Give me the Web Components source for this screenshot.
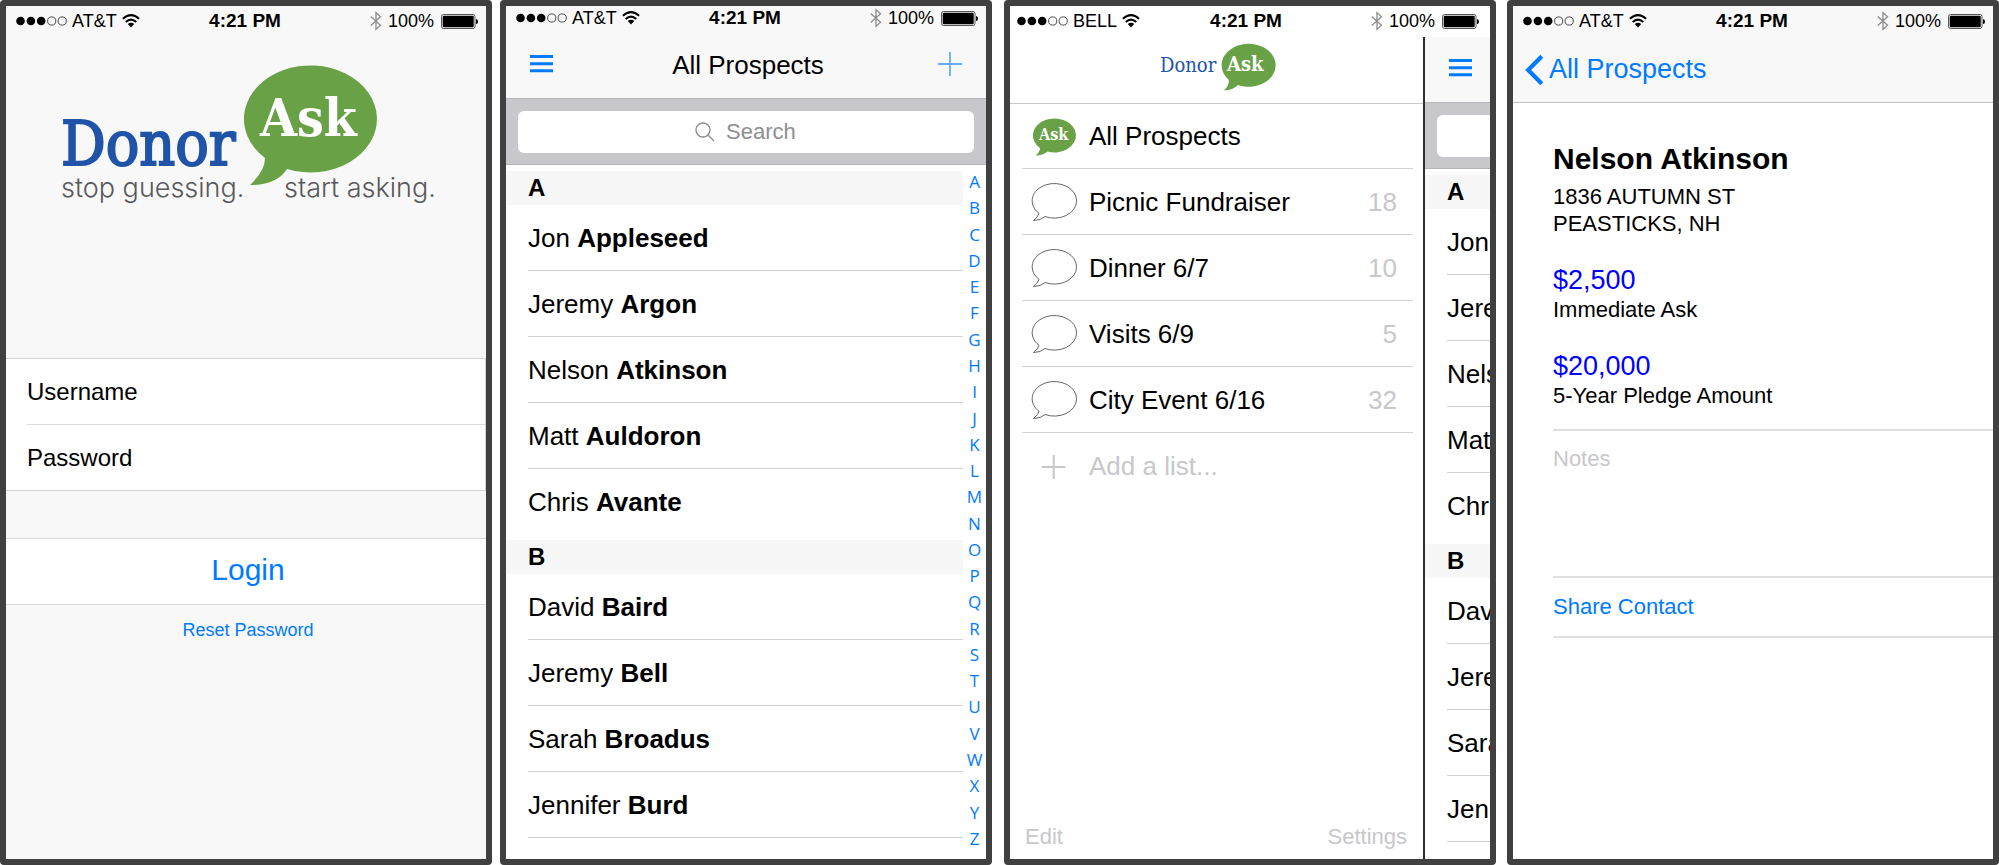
<!DOCTYPE html>
<html lang="en">
<head>
<meta charset="utf-8">
<title>DonorAsk mobile screens</title>
<style>
  body { margin: 0; background: #fff; color: #000; font-family: "Liberation Sans", Arial, sans-serif; }
  main { display: flex; }
  phone-frame { flex: 1 1 0; min-width: 0; }
  phone-frame:nth-child(2) { margin-left: 8px; }
  phone-frame:nth-child(3) { margin-left: 12px; }
  phone-frame:nth-child(4) { margin-left: 11px; }
</style>
</head>
<body>
<main>
  <phone-frame carrier="AT&amp;T" style="--screen:#f8f8f8"><login-screen></login-screen></phone-frame>
  <phone-frame carrier="AT&amp;T" style="--status:#f8f8f8;--status-height:27px;--status-bottom:3px"><prospects-screen full></prospects-screen></phone-frame>
  <phone-frame carrier="BELL" style="--status-left:7px;--status-right:11px"><drawer-screen></drawer-screen></phone-frame>
  <phone-frame carrier="AT&amp;T" style="--status:#f8f8f8"><contact-screen></contact-screen></phone-frame>
</main>
<script>
const define = (name, render) => customElements.define(name, class extends HTMLElement {
  connectedCallback() {
    if (this.shadowRoot) return;
    this.attachShadow({ mode: 'open' }).innerHTML = render(this);
  }
});

const reset = `
  *, *::before { box-sizing: border-box; }
  button, input, textarea { font: inherit; color: inherit; background: none; border: 0; padding: 0; margin: 0; outline: 0; }
  a { color: #007aff; text-decoration: none; }
  svg { display: block; flex: none; }
`;

define('status-bar', el => `
  <style>${reset}
    :host { display: grid; grid-template-columns: 1fr auto 1fr; align-items: center; box-sizing: border-box;
      height: var(--status-height, 31px); padding: 0 var(--status-right, 8px) var(--status-bottom, 1px) var(--status-left, 10px);
      background: var(--status, transparent); font-size: 18px; line-height: 24px; white-space: nowrap; }
    .side { display: flex; align-items: center; }
    .carrier { margin: 0 5px; }
    .right { justify-content: flex-end; }
    .time { font-size: 19px; font-weight: bold; padding-right: 4px; }
    .percent { margin: 0 7px 0 6px; }
  </style>
  <div class="side">
    <svg width="51" height="10" viewBox="0 0 51 10" aria-hidden="true">
      <circle cx="4.5" cy="5" r="4.3"/><circle cx="14.9" cy="5" r="4.3"/><circle cx="25.2" cy="5" r="4.3"/>
      <g fill="none" stroke="#222" stroke-width=".8"><circle cx="35.7" cy="5" r="4.1"/><circle cx="46.2" cy="5" r="4.1"/></g>
    </svg>
    <span class="carrier">${el.getAttribute('carrier').replace('&', '&amp;')}</span>
    <svg width="18" height="14" viewBox="0 0 18 14" aria-hidden="true">
      <g fill="none" stroke="#000" stroke-width="2"><path d="M.9 4.7Q9-2.5 17.1 4.7"/><path d="M3.7 7.9Q9 3.3 14.3 7.9"/></g>
      <path d="M5.8 10Q9 7.4 12.2 10L9 13.6Z"/>
    </svg>
  </div>
  <span class="time">4:21 PM</span>
  <div class="side right">
    <svg width="12" height="20" viewBox="0 0 12 20" aria-hidden="true"><path d="M.8 5.5L10.5 14.3L6 18.4V1.6L10.5 5.7L.8 14.5" fill="none" stroke="#8c8c8c" stroke-width="1.3"/></svg>
    <span class="percent">100%</span>
    <svg width="37" height="15" viewBox="0 0 37 15" aria-hidden="true">
      <rect x=".5" y=".5" width="33.5" height="14" rx="2" fill="none" stroke="#555"/>
      <rect x="1.7" y="1.7" width="31" height="11.6" rx="1"/><path d="M35 5Q37 5 37 7.5T35 10Z"/>
    </svg>
  </div>`);

define('phone-frame', el => `
  <style>
    :host { display: flex; flex-direction: column; box-sizing: border-box; min-height: 100vh;
      border: 6px solid #404040; border-radius: 4px; background: var(--screen, #fff); overflow: hidden; }
    ::slotted(*) { flex: 1; }
  </style>
  <status-bar carrier="${el.getAttribute('carrier').replace('&', '&amp;')}"></status-bar>
  <slot></slot>`);

const logoText = `
  text { font-family: "DejaVu Serif Condensed", "DejaVu Serif", serif; }
  .donor { fill: #2054a8; } .ask { fill: #fff; font-weight: bold; } .bubble { fill: #69a147; }
`;

define('donor-logo', el => el.hasAttribute('small') ? `
  <style>${reset}${logoText} :host { display: block; } text { font-size: 20px; }</style>
  <svg width="116" height="48" viewBox="0 0 116 48" role="img" aria-label="Donor Ask">
    <text class="donor" x="0" y="29">Donor</text>
    <path class="bubble" d="M69 37A27 21.5 0 1 1 78 42Q73 47 64 47.5Q69 43 69 37Z"/>
    <text class="ask" x="67" y="28">Ask</text>
  </svg>` : `
  <style>${reset}${logoText} :host { display: block; }
    .donor { font-size: 62px; stroke: #2054a8; stroke-width: 2px; } .ask { font-size: 53px; }
    .tag { font-family: Inter, "Liberation Sans", sans-serif; font-weight: 300; font-size: 27px; fill: #58585a; }
  </style>
  <svg width="380" height="142" viewBox="60 64 380 142" role="img" aria-label="Donor Ask, stop guessing. start asking.">
    <text class="donor" x="61" y="165">Donor</text>
    <path class="bubble" d="M265 158A66.5 53.5 0 1 1 287 169Q277 185 250 185Q265 171 265 158Z"/>
    <text class="ask" x="260" y="136">Ask</text>
    <text class="tag" x="61" y="197">stop guessing.</text>
    <text class="tag" x="284" y="197">start asking.</text>
  </svg>`);

define('login-screen', () => `
  <style>${reset}
    :host { display: flex; flex-direction: column; font-size: 24px; }
    donor-logo { margin: 27px 0 0 54px; height: 142px; }
    form { margin-top: 152px; }
    .fields { background: #fff; border: solid #d3d3d6; border-width: 1px 1px 1px 0; padding-left: 21px; }
    label { display: flex; align-items: center; height: 65px; gap: 12px; }
    label + label { border-top: 1px solid #dcdcde; height: 66px; }
    input { flex: 1; min-width: 0; }
    button { display: block; width: 100%; height: 67px; margin-top: 47px; padding: 0 0 4px 4px; background: #fff; color: #007aff;
      border: solid #d9d9dc; border-width: 1px 0; font-size: 30px; }
    .reset { display: block; text-align: center; font-size: 18px; line-height: 24px; margin-top: 13px; padding-left: 4px; }
  </style>
  <donor-logo></donor-logo>
  <form>
    <div class="fields">
      <label>Username <input type="text" name="username"></label>
      <label>Password <input type="password" name="password"></label>
    </div>
    <button type="button">Login</button>
    <a class="reset" href="#reset">Reset Password</a>
  </form>`);

const people = {
  A: [['Jon', 'Appleseed'], ['Jeremy', 'Argon'], ['Nelson', 'Atkinson'], ['Matt', 'Auldoron'], ['Chris', 'Avante']],
  B: [['David', 'Baird'], ['Jeremy', 'Bell'], ['Sarah', 'Broadus'], ['Jennifer', 'Burd']]
};

define('prospects-screen', el => {
  const full = el.hasAttribute('full');
  return `
  <style>${reset}
    :host { display: flex; flex-direction: column; background: #fff; font-size: 26px; white-space: nowrap; }
    header { display: grid; grid-template-columns: 1fr auto 1fr; align-items: center; height: 66px; padding: 0 24px;
      background: #f8f8f8; border-bottom: 1px solid #b5b5b8; }
    header button { padding-bottom: 4px; justify-self: start; }
    header .add { justify-self: end; }
    h1 { margin: 0; padding-left: 4px; font-size: 26px; font-weight: normal; }
    .search { height: 66px; padding: 12px; background: #c8c7cc; border-bottom: 1px solid #b5b5b8; }
    .search label { display: flex; align-items: center; justify-content: center; gap: 11px; height: 42px;
      border-radius: 6px; background: #fff; color: #8e8e93; font-size: 22px; }
    .search input { width: 71px; }
    .search input::placeholder { color: #8e8e93; opacity: 1; }
    .body { flex: 1; display: flex; }
    .list { flex: 1; padding-top: 1px; }
    section { padding-top: 5px; }
    h2 { margin: 0; padding-left: 22px; font-size: 24px; line-height: 34px; background: #f7f7f7; }
    ul { list-style: none; margin: 0; padding: 0 0 0 22px; }
    li { height: 66px; line-height: 66px; border-bottom: 1px solid #d3d3d6; }
    section:first-child li:last-child { border-color: transparent; }
    nav { display: flex; flex-direction: column; width: 23px; margin: 4px 0 7px;
      font-family: "Open Sans", sans-serif; font-size: 17px; text-align: center; }
    nav a { flex: 1; display: flex; align-items: center; justify-content: center; line-height: 20px; }
  </style>
  <header>
    <button type="button" aria-label="Menu"><svg width="23" height="18" viewBox="0 0 23 18"><path d="M0 1.5H23M0 8.7H23M0 15.8H23" stroke="#007aff" stroke-width="3"/></svg></button>
    ${full ? `<h1>All Prospects</h1>
    <button class="add" type="button" aria-label="Add"><svg width="24" height="24" viewBox="0 0 24 24"><path d="M0 12H24M12 0V24" stroke="#62acff" stroke-width="1.8"/></svg></button>` : ''}
  </header>
  <div class="search"><label>${full ? `
    <svg width="20" height="20" viewBox="0 0 20 20"><g fill="none" stroke="#8e8e93" stroke-width="1.4"><circle cx="8" cy="8" r="7"/><path d="M13 13L19 19"/></g></svg>
    <input type="text" placeholder="Search" aria-label="Search">` : ''}</label></div>
  <div class="body">
    <div class="list">${Object.entries(people).map(([letter, names]) => `
      <section><h2>${letter}</h2><ul>${names.map(([first, last]) => `<li>${first}${full ? ` <b>${last}</b>` : ''}</li>`).join('')}</ul></section>`).join('')}
    </div>
    ${full ? `<nav aria-label="Index">${[...'ABCDEFGHIJKLMNOPQRSTUVWXYZ'].map(c => `<a href="#${c}">${c}</a>`).join('')}</nav>` : ''}
  </div>`;
});

const lists = [['Picnic Fundraiser', 18], ['Dinner 6/7', 10], ['Visits 6/9', 5], ['City Event 6/16', 32]];

define('drawer-screen', () => `
  <style>${reset}${logoText}
    :host { display: flex; font-size: 26px; }
    .drawer { flex: 1; min-width: 0; display: flex; flex-direction: column; }
    header { height: 67px; display: flex; justify-content: center; padding: 6px 0 0 2px; border-bottom: 1px solid #c8c7cc; }
    ul { list-style: none; margin: 0 10px 0 12px; padding: 0; }
    li { height: 66px; border-bottom: 1px solid #d3d3d6; }
    li:first-child { height: 65px; }
    li:last-child { border: 0; }
    a, button { display: flex; align-items: center; gap: 12px; width: 100%; height: 100%; padding: 1px 16px 0 9px; color: #000; }
    button { color: #c7c7cc; }
    .count { margin-left: auto; color: #c7c7cc; }
    text { font-size: 16px; }
    footer { display: flex; justify-content: space-between; margin-top: auto; padding: 0 16px 8px 15px; font-size: 22px; line-height: 28px; }
    footer a { display: block; width: auto; padding: 0; color: #c7c7cc; }
    .peek { flex: 0 0 67px; overflow: hidden; border-left: 2px solid #2e2e2e; }
    .peek prospects-screen { min-width: 480px; }
  </style>
  <div class="drawer">
    <header><donor-logo small></donor-logo></header>
    <ul>
      <li><a href="#all"><svg width="46" height="40" viewBox="0 0 46 40" aria-hidden="true">
        <path class="bubble" d="M9 31A21.5 17 0 1 1 16.5 34.5Q12 38.5 4.5 38.5Q9 35 9 31Z"/><text class="ask" x="8" y="23">Ask</text></svg>All Prospects</a></li>
      ${lists.map(([name, count]) => `<li><a href="#list"><svg width="46" height="40" viewBox="0 0 46 40" aria-hidden="true">
        <path d="M8 31.3A22.2 17.3 0 1 1 14 34.5Q10 38.5 2.5 38.5Q7 35 8 31.3Z" fill="none" stroke="#555" stroke-width=".9"/></svg>${name}<span class="count">${count}</span></a></li>`).join('')}
      <li><button type="button"><svg width="46" height="40" viewBox="0 0 46 40" aria-hidden="true"><path d="M11 20H34.5M22.7 8V32" stroke="#c7c7cc" stroke-width="2"/></svg>Add a list...</button></li>
    </ul>
    <footer><a href="#edit">Edit</a><a href="#settings">Settings</a></footer>
  </div>
  <div class="peek"><prospects-screen></prospects-screen></div>`);

define('contact-screen', () => `
  <style>${reset}
    :host { display: block; font-size: 22px; line-height: 27px; }
    header { display: flex; align-items: center; height: 66px; padding-left: 12px; background: #f8f8f8; border-bottom: 1px solid #c3c3c6; }
    header a { display: flex; align-items: center; gap: 5px; font-size: 27px; }
    .card { padding: 38px 0 0 40px; }
    h1 { margin: 0; font-size: 30px; line-height: 36px; }
    address { font-style: normal; margin-top: 6px; }
    dl { margin: 0; }
    dl div { display: flex; flex-direction: column-reverse; margin-top: 28px; }
    dd { margin: 0; font-size: 27px; line-height: 31px; color: #00f; }
    .notes { display: block; margin-top: 20px; border: solid #e0e0e2; border-width: 2px 0; height: 149px; padding-top: 14px; }
    textarea { display: block; width: 100%; height: 120px; resize: none; }
    textarea::placeholder { color: #c7c7cc; opacity: 1; }
    .share { display: block; line-height: 58px; border-bottom: 2px solid #e0e0e2; }
  </style>
  <header><a href="#all"><svg width="19" height="32" viewBox="0 0 19 32" aria-hidden="true"><path d="M16.8 2.2L3.2 16L16.8 29.8" fill="none" stroke="#007aff" stroke-width="4.2"/></svg>All Prospects</a></header>
  <div class="card">
    <h1>Nelson Atkinson</h1>
    <address>1836 AUTUMN ST<br>PEASTICKS, NH</address>
    <dl>
      <div><dt>Immediate Ask</dt><dd>$2,500</dd></div>
      <div><dt>5-Year Pledge Amount</dt><dd>$20,000</dd></div>
    </dl>
    <label class="notes"><textarea placeholder="Notes" aria-label="Notes"></textarea></label>
    <a class="share" href="#share">Share Contact</a>
  </div>`);
</script>
</body>
</html>
